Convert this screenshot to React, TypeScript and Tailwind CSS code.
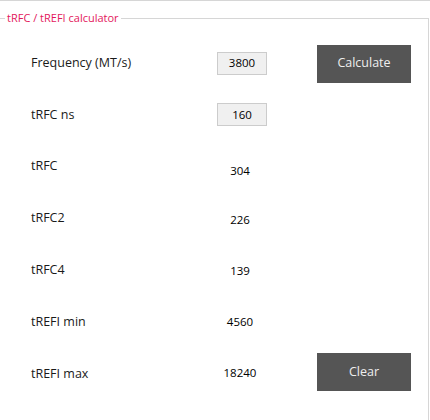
import React from "react";

type Row = {
  label: string;
  kind: "input" | "value";
  value: string;
  rowClass: string;
  valueClass?: string;
  button?: { text: string; className: string };
};

const rows: Row[] = [
  {
    label: "Frequency (MT/s)",
    kind: "input",
    value: "3800",
    rowClass: "h-[52px]",
    button: { text: "Calculate", className: "mt-[1px]" },
  },
  { label: "tRFC ns", kind: "input", value: "160", rowClass: "h-[51px]" },
  { label: "tRFC", kind: "value", value: "304", rowClass: "h-[52px]", valueClass: "pt-[10px]" },
  { label: "tRFC2", kind: "value", value: "226", rowClass: "h-[52px]", valueClass: "pt-[4px]" },
  { label: "tRFC4", kind: "value", value: "139", rowClass: "h-[52px]", valueClass: "pt-[2px]" },
  { label: "tREFI min", kind: "value", value: "4560", rowClass: "h-[52px]", valueClass: "" },
  {
    label: "tREFI max",
    kind: "value",
    value: "18240",
    rowClass: "h-[52px]",
    valueClass: "pb-[2px]",
    button: { text: "Clear", className: "mb-[4px]" },
  },
];

export default function App() {
  return (
    <div className="w-[430px] h-[420px] overflow-hidden bg-white border-t border-[#d6d6d6] font-['Open_Sans','Noto_Sans',sans-serif] text-[#1a1a1a]">
      <fieldset className="mt-[9px] w-[429px] h-[460px] border-t border-r border-b border-[#d6d6d6]">
        <legend className="ml-[5px] px-[2px] text-[11px] leading-[16px] text-[#e3175c]">
          tRFC / tREFI calculator
        </legend>
        <div className="flex flex-col pl-[31px] pt-[11px]">
          {rows.map((r) => (
            <div key={r.label} className={`flex items-center ${r.rowClass}`}>
              <div className="w-[186px] text-[12.5px] leading-[18px]">{r.label}</div>
              {r.kind === "input" ? (
                <div className="w-[50px] h-[23px] flex items-center justify-center bg-[#f0f0f0] border border-[#cccccc] text-[11.5px] text-black">
                  {r.value}
                </div>
              ) : (
                <div className={`w-[46px] text-center text-[11.5px] leading-[16px] text-black ${r.valueClass ?? ""}`}>
                  {r.value}
                </div>
              )}
              {r.button && (
                <div
                  className={`ml-auto mr-[17px] w-[94px] h-[38px] flex items-center justify-center bg-[#555555] text-[#eeeeee] text-[12.5px] ${r.button.className}`}
                >
                  {r.button.text}
                </div>
              )}
            </div>
          ))}
        </div>
      </fieldset>
    </div>
  );
}
